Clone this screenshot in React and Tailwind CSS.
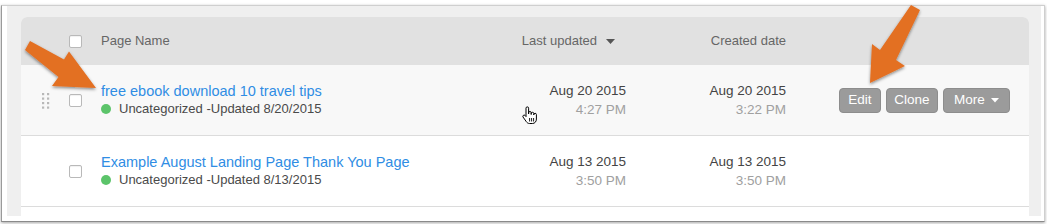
import React from "react";

const font = { fontFamily: '"Liberation Sans", Arial, Helvetica, sans-serif' };

function Checkbox() {
  return (
    <div className="w-[13px] h-[13px] rounded-[2px] border border-[#b9b9b9] bg-white shadow-[inset_0_1px_1px_rgba(0,0,0,0.06)]" />
  );
}

function Handle() {
  const dots = [];
  for (let r = 0; r < 4; r++) {
    for (let c = 0; c < 2; c++) {
      dots.push(<rect key={r + "-" + c} x={c * 5} y={r * 4.5} width="2.2" height="2.2" fill="#b8b8b8" />);
    }
  }
  return (
    <svg width="8" height="16" viewBox="0 0 8 16">
      {dots}
    </svg>
  );
}

function Row({ title, updated, last, lastTime, created, createdTime, hover, actions, handle }) {
  return (
    <div className={`flex items-center h-[71px] border-b border-[#dcdcdc] ${hover ? "bg-[#f8f8f8]" : "bg-white"}`}>
      <div className="w-[48px] pl-[21px] flex items-center pt-[2px]">{handle ? <Handle /> : null}</div>
      <div className="w-[32px] flex items-center">
        <Checkbox />
      </div>
      <div className="w-[400px] flex flex-col">
        <div className="text-[14.5px] leading-[18px] text-[#2f8de4]">{title}</div>
        <div className="flex items-center text-[13px] leading-[18px] text-[#4a4a4a]">
          <span className="w-[10px] h-[10px] rounded-full bg-[#5cc46a] mr-[8px]" />
          <span>{updated}</span>
        </div>
      </div>
      <div className="w-[125px] flex flex-col items-end text-[13.5px]">
        <div className="leading-[18px] text-[#444]">{last}</div>
        <div className="leading-[19px] text-[#a0a0a0]">{lastTime}</div>
      </div>
      <div className="w-[160px] flex flex-col items-end text-[13.5px]">
        <div className="leading-[18px] text-[#444]">{created}</div>
        <div className="leading-[19px] text-[#a0a0a0]">{createdTime}</div>
      </div>
      {actions ? (
        <div className="pl-[53px] flex items-center gap-[5px] pt-[1px]">
          <button className="h-[25px] w-[42px] rounded-[4px] bg-[#9b9b9b] border border-[#8d8d8d] text-white text-[13.5px]">Edit</button>
          <button className="h-[25px] w-[52px] rounded-[4px] bg-[#9b9b9b] border border-[#8d8d8d] text-white text-[13.5px]">Clone</button>
          <button className="h-[25px] w-[67px] rounded-[4px] bg-[#9b9b9b] border border-[#8d8d8d] text-white text-[13.5px] flex items-center justify-center gap-[6px]">
            <span>More</span>
            <svg width="8" height="5" viewBox="0 0 8 5"><path d="M0 0h8L4 4.5z" fill="#fff" /></svg>
          </button>
        </div>
      ) : null}
    </div>
  );
}

export default function App() {
  return (
    <div className="relative w-[1047px] h-[224px] bg-white pt-[5px] pl-[1px] overflow-hidden" style={font}>
      <div className="w-[1044px] h-[217px] border border-[#cfcfcf] border-l-[#9a9a9a] border-b-[#8a8a8a] bg-white pl-[5px] pr-[3px] pb-[5px] shadow-[0_1px_3px_rgba(0,0,0,0.35)]">
        <div className="h-full bg-[#efefef] pt-[11px] pl-[14px] pr-[12px]">
          <div className="h-full bg-white rounded-t-[6px] overflow-hidden">
            <div className="flex items-center h-[48px] bg-[#e1e1e1] text-[13px] text-[#666]">
              <div className="w-[48px]" />
              <div className="w-[32px] flex items-center">
                <Checkbox />
              </div>
              <div className="w-[400px]">Page Name</div>
              <div className="w-[125px] flex items-center justify-end gap-[9px] pr-[11px]">
                <span>Last updated</span>
                <svg width="9" height="5" viewBox="0 0 9 5"><path d="M0 0h9L4.5 5z" fill="#555" /></svg>
              </div>
              <div className="w-[160px] text-right">Created date</div>
            </div>
            <Row
              hover
              handle
              actions
              title="free ebook download 10 travel tips"
              updated="Uncategorized -Updated 8/20/2015"
              last="Aug 20 2015"
              lastTime="4:27 PM"
              created="Aug 20 2015"
              createdTime="3:22 PM"
            />
            <Row
              title="Example August Landing Page Thank You Page"
              updated="Uncategorized -Updated 8/13/2015"
              last="Aug 13 2015"
              lastTime="3:50 PM"
              created="Aug 13 2015"
              createdTime="3:50 PM"
            />
          </div>
        </div>
      </div>

      {/* Annotation arrows */}
      <svg className="absolute left-0 top-0 pointer-events-none" width="1047" height="224" viewBox="0 0 1047 224">
        <defs>
          <filter id="sh" x="-20%" y="-20%" width="140%" height="140%">
            <feDropShadow dx="0" dy="1.5" stdDeviation="1.5" floodColor="#000" floodOpacity="0.45" />
          </filter>
        </defs>
        <g filter="url(#sh)" fill="#e36f22">
          <path d="M25 50 L30 41 L64 59.5 L69 51.5 L96 88 L52 86 L58.5 77 Z" />
          <path d="M911 5 L920 10 L896 60 L905 66 L870 83 L872 44 L880 50 Z" />
        </g>
      </svg>

      {/* Cursor */}
      <svg className="absolute left-[521px] top-[106px] pointer-events-none" width="17" height="19" viewBox="0 0 17 19">
        <path
          d="M5 2.2 a1.3 1.3 0 0 1 2.6 0 V8 V6.8 a1.3 1.3 0 0 1 2.6 0 V8.5 V7.6 a1.3 1.3 0 0 1 2.6 0 V9 V8.6 a1.3 1.3 0 0 1 2.6 0 V13 c0 2.6 -1.6 4.5 -4 4.5 H8.6 c-1.6 0 -2.6 -0.8 -3.4 -2 L2 11 a1.3 1.3 0 0 1 2 -1.6 L5 10.6 Z"
          fill="#fff"
          stroke="#000"
          strokeWidth="1"
          strokeLinejoin="round"
        />
        <path d="M8.6 12 v3.5 M10.6 12 v3.5 M12.6 12 v3.5" stroke="#000" strokeWidth="0.9" />
      </svg>
    </div>
  );
}
